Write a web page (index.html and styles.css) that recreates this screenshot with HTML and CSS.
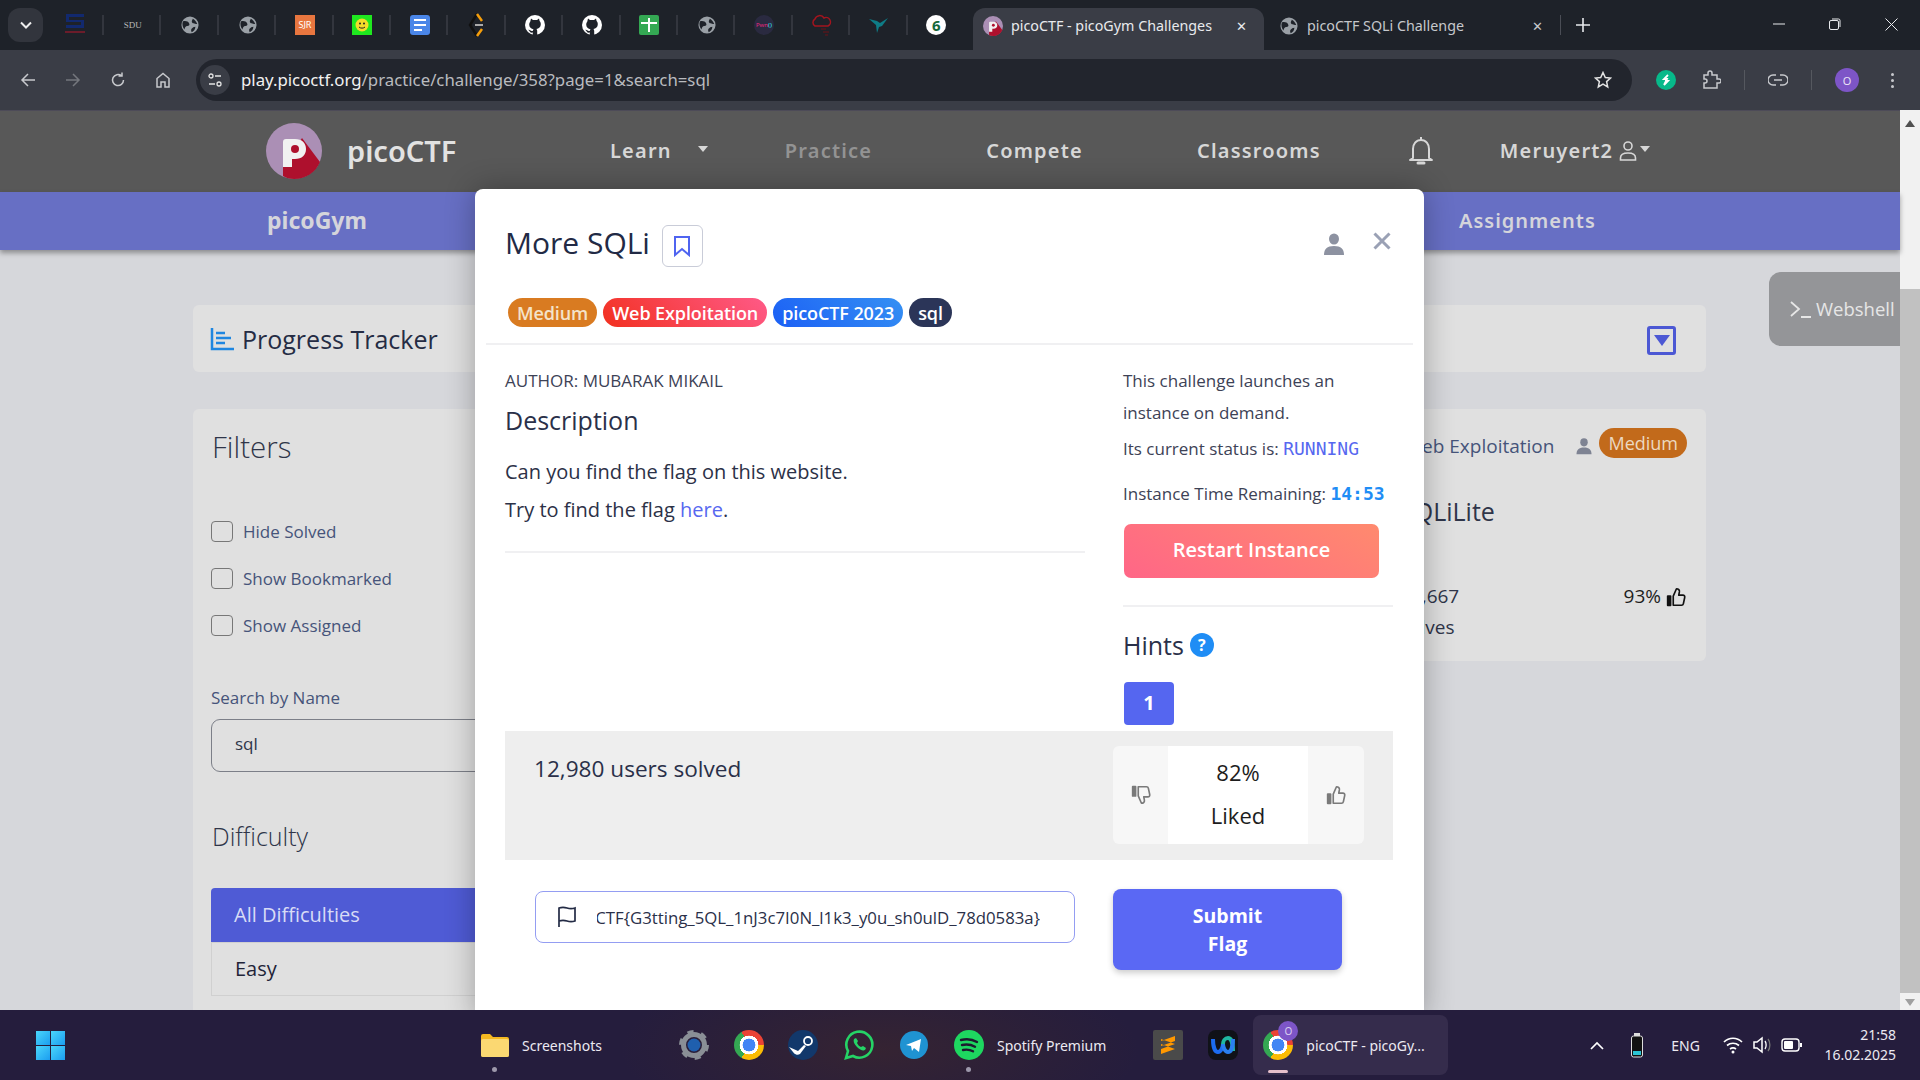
FILE: index.html
```html
<!DOCTYPE html>
<html lang="en">
<head>
  <meta charset="UTF-8">
  <title>picoCTF - picoGym Challenges</title>
  <link rel="stylesheet" href="styles.css">
</head>
<body>
  <svg class="defs" width="0" height="0">
    <defs>
      <symbol id="globe" viewBox="0 0 20 20">
        <circle cx="10" cy="10" r="9.500" fill="#9aa0a6"/>
        <path d="M2 6c3-1 6 0 7 2s0 3-2 3-3 2-3 4C2 13 1 9 2 6zM13 3c2 1 4 3 5 6-2 0-3-1-4-1s-2-1-2-2 1-2 1-3zM16 12c0 3-2 5-4 6-1-1-1-3 0-4s2-2 4-2z" fill="#1e2229"/>
      </symbol>
      <symbol id="github" viewBox="0 0 20 20">
        <circle cx="10" cy="10" r="10" fill="#fff"/>
        <path d="M6 3.500l2 1.400h4l2-1.400.6 2.600c.9 1 1.200 2 1.200 3.200 0 3-2 4.400-4.400 4.700.5.5.8 1.100.8 2V20H7.800v-2.500c-1.800.4-2.900-.1-3.500-1.700l-1.300-1 2 .2c.6 1 1.500 1.300 2.800 1 0-.8.3-1.300.8-1.700-2.400-.3-4.400-1.700-4.400-4.700 0-1.200.3-2.200 1.100-3.200z" fill="#1e2229"/>
      </symbol>
      <symbol id="thumb" viewBox="0 0 24 24">
        <rect x="2" y="10" width="5" height="12" rx="1" fill="currentColor"/>
        <path d="M9 11l3.500-8c2.200 0 3.500 1.500 3.200 3.500l-.7 3.500h4.500c1.500 0 2.300 1.200 2 2.500l-1.500 7c-.2 1-1 1.500-2 1.500H9z" fill="none" stroke="currentColor" stroke-width="1.800" stroke-linejoin="round"/>
      </symbol>
      <symbol id="person" viewBox="0 0 24 24">
        <ellipse cx="12" cy="7" rx="5" ry="5.500" fill="currentColor"/>
        <path d="M2 23c0-6 3-9 10-9s10 3 10 9z" fill="currentColor"/>
      </symbol>
      <symbol id="pico" viewBox="0 0 56 56">
        <circle cx="28" cy="28" r="28" fill="#ab8fb5"/>
        <path d="M17 44L36 15l18 24C50 49 40 56 28 56c-4 0-8-1-11-3z" fill="#ae102d"/>
        <path d="M17 44V19c0-2 1-3 3-3h9c7 0 11 4 11 10s-4 10-11 10h-3v8z" fill="#f1f1f1"/>
        <circle cx="29" cy="26" r="4" fill="#ae102d"/>
      </symbol>
    </defs>
  </svg>

  <div class="tabstrip">
    <div class="tabsearch"><svg width="12" height="8" viewBox="0 0 12 8"><path d="M1 1.500l5 5 5-5" fill="none" stroke="#eee" stroke-width="2"/></svg></div>
    <div class="pins">
      <div class="pin"><svg width="22" height="24" viewBox="0 0 22 24"><path d="M2 1h18v3H5v3h15v8H2v-3h15V9H2z" fill="#12296e"/><rect x="1" y="18" width="20" height="2" fill="#6b1c2a"/></svg></div>
      <div class="pin"><span class="sdu">SDU</span></div>
      <div class="pin"><svg class="ic18"><use href="#globe"/></svg></div>
      <div class="pin"><svg class="ic18"><use href="#globe"/></svg></div>
      <div class="pin"><span class="sjr">SJR</span></div>
      <div class="pin"><span class="smile"><svg width="14" height="14" viewBox="0 0 14 14"><circle cx="7" cy="7" r="6.500" fill="#f3dc2a"/><circle cx="5" cy="5.500" r="1" fill="#222"/><circle cx="9" cy="5.500" r="1" fill="#222"/><path d="M4 9c1.500 1.500 4.500 1.500 6 0" fill="none" stroke="#222"/></svg></span></div>
      <div class="pin"><span class="gdoc"><i></i><i></i><i class="short"></i></span></div>
      <div class="pin"><svg width="20" height="24" viewBox="0 0 20 24"><path d="M10 1L3 12l7 11" fill="none" stroke="#111" stroke-width="2.500"/><path d="M10 1l5 7M10 23l5-7" fill="none" stroke="#f59e0b" stroke-width="2.500"/><rect x="8" y="11" width="8" height="2" fill="#aaa"/></svg></div>
      <div class="pin"><svg class="ic20"><use href="#github"/></svg></div>
      <div class="pin"><svg class="ic20"><use href="#github"/></svg></div>
      <div class="pin"><span class="gplus"></span></div>
      <div class="pin"><svg class="ic18"><use href="#globe"/></svg></div>
      <div class="pin"><span class="pwn">Pwn<b>()</b></span></div>
      <div class="pin"><svg width="22" height="22" viewBox="0 0 22 22"><path d="M5 12a4 4 0 0 1 0-7 5 5 0 0 1 9-1 4 4 0 0 1 4 8z" fill="none" stroke="#a3141e" stroke-width="1.500"/><path d="M11 15h5M13 18h6M15 21h3" stroke="#6d1016" stroke-width="1.200"/></svg></div>
      <div class="pin"><svg width="20" height="18" viewBox="0 0 20 18"><path d="M0 3l8 2 3 2 8-5-6 8-3 1-2 6-1-8z" fill="#0e7c86"/></svg></div>
      <div class="pin last"><span class="six">6</span></div>
    </div>
    <div class="tab active">
      <svg class="favicon"><use href="#pico"/></svg>
      <span class="tabtitle">picoCTF - picoGym Challenges</span>
      <span class="tabx">✕</span>
    </div>
    <div class="tab">
      <svg class="ic18"><use href="#globe"/></svg>
      <span class="tabtitle">picoCTF SQLi Challenge</span>
      <span class="tabx">✕</span>
    </div>
    <span class="tabsep"></span>
    <svg class="newtab" width="14" height="14" viewBox="0 0 14 14"><path d="M7 0v14M0 7h14" stroke="#e8eaed" stroke-width="1.600"/></svg>
    <div class="winctl">
      <svg width="12" height="12" viewBox="0 0 12 12"><path d="M0 6h12" stroke="#e8eaed"/></svg>
      <svg width="12" height="12" viewBox="0 0 12 12"><rect x=".5" y="2.500" width="9" height="9" rx="1.500" fill="none" stroke="#e8eaed"/><path d="M3 1h6.500A1.500 1.500 0 0 1 11 2.500V9" fill="none" stroke="#e8eaed"/></svg>
      <svg width="13" height="13" viewBox="0 0 13 13"><path d="M.5.5l12 12M12.500.5l-12 12" stroke="#e8eaed"/></svg>
    </div>
  </div>

  <div class="toolbar">
    <div class="navbtns">
      <svg width="16" height="16" viewBox="0 0 16 16"><path d="M15 8H2M8 2L2 8l6 6" fill="none" stroke="#c7c9cd" stroke-width="1.500"/></svg>
      <svg width="16" height="16" viewBox="0 0 16 16"><path d="M1 8h13M8 2l6 6-6 6" fill="none" stroke="#74777d" stroke-width="1.500"/></svg>
      <svg width="16" height="16" viewBox="0 0 16 16"><path d="M13.500 8A5.500 5.500 0 1 1 11.500 3.800M12 .5v3.500H8.500" fill="none" stroke="#c7c9cd" stroke-width="1.500"/></svg>
      <svg width="16" height="16" viewBox="0 0 16 16"><path d="M2 15V6.500L8 1.500l6 5V15h-4v-5H6v5z" fill="none" stroke="#c7c9cd" stroke-width="1.500"/></svg>
    </div>
    <div class="omnibox">
      <span class="tune"><svg width="16" height="16" viewBox="0 0 16 16"><circle cx="4" cy="4" r="2" fill="none" stroke="#e3e3e3" stroke-width="1.300"/><path d="M8 4h6M2 12h6" stroke="#e3e3e3" stroke-width="1.300"/><circle cx="12" cy="12" r="2" fill="none" stroke="#e3e3e3" stroke-width="1.300"/></svg></span>
      <span class="url"><span class="host">play.picoctf.org</span>/practice/challenge/358?page=1&amp;search=sql</span>
      <svg class="star" width="18" height="18" viewBox="0 0 18 18"><path d="M9 1.500l2.300 5 5.200.6-3.900 3.500 1.100 5.300L9 13.200l-4.700 2.700 1.100-5.300L1.500 7.100l5.200-.6z" fill="none" stroke="#e3e3e3" stroke-width="1.500"/></svg>
    </div>
    <div class="tools">
      <span class="extgreen"><svg width="14" height="14" viewBox="0 0 14 14"><path d="M9 2L5 6h3l-3 6M5 12l4-4H6" fill="none" stroke="#fff" stroke-width="1.800"/></svg></span>
      <svg class="puzzle" width="20" height="20" viewBox="0 0 20 20"><path d="M3 5h4V3a2 2 0 0 1 4 0v2h5v4h2a2 2 0 0 1 0 4h-2v5H3v-5h1a2 2 0 0 0 0-4H3z" fill="none" stroke="#c7c9cd" stroke-width="1.500"/></svg>
      <span class="toolsep"></span>
      <svg class="chain" width="20" height="12" viewBox="0 0 20 12"><path d="M8 1H5a5 5 0 0 0 0 10h3M12 1h3a5 5 0 0 1 0 10h-3M6 6h8" fill="none" stroke="#c7c9cd" stroke-width="1.500"/></svg>
      <span class="toolsep"></span>
      <span class="avatar">O</span>
      <span class="dots"><i></i><i></i><i></i></span>
    </div>
  </div>

  <div class="page">
    <div class="content">
      <nav class="topnav">
        <svg class="logo"><use href="#pico"/></svg>
        <span class="brand">picoCTF</span>
        <span class="navlink learn">Learn</span>
        <span class="caret learncaret"></span>
        <span class="navlink practice">Practice</span>
        <span class="navlink compete">Compete</span>
        <span class="navlink classrooms">Classrooms</span>
        <svg class="bell" width="26" height="30" viewBox="0 0 26 30"><path d="M13 1v3M5 22V13c0-5 3-9 8-9s8 4 8 9v9l3 2H2z" fill="none" stroke="#d7d7d7" stroke-width="2" stroke-linejoin="round"/><path d="M10 27h6" stroke="#d7d7d7" stroke-width="3" stroke-linecap="round"/></svg>
        <span class="navlink user">Meruyert2</span>
        <svg class="usericon" width="18" height="20" viewBox="0 0 18 20"><circle cx="9" cy="5" r="4" fill="none" stroke="#d7d7d7" stroke-width="1.600"/><path d="M1.500 19v-2c0-3 2-5 7.500-5s7.500 2 7.500 5v2z" fill="none" stroke="#d7d7d7" stroke-width="1.600"/></svg>
        <span class="caret"></span>
      </nav>
      <div class="subnav">
        <span class="subgym">picoGym</span>
        <span class="subassign">Assignments</span>
      </div>

      <main class="practice-main">
        <section class="tracker">
          <svg width="26" height="24" viewBox="0 0 26 24"><path d="M2 1v21h22" fill="none" stroke="#1f86e0" stroke-width="2.500"/><path d="M6 6h9M6 11h15M6 16h9" stroke="#1f86e0" stroke-width="2.500"/></svg>
          <span class="tracker-title">Progress Tracker</span>
          <span class="tracker-toggle"><i></i></span>
        </section>
        <div class="columns">
          <aside class="filters">
            <h3 class="filters-title">Filters</h3>
            <label class="check"><i></i>Hide Solved</label>
            <label class="check"><i></i>Show Bookmarked</label>
            <label class="check"><i></i>Show Assigned</label>
            <div class="search-label">Search by Name</div>
            <div class="search-box">sql</div>
            <h3 class="difficulty">Difficulty</h3>
            <div class="diff active">All Difficulties</div>
            <div class="diff">Easy</div>
          </aside>
          <article class="card">
            <div class="card-top">
              <span class="card-cat">Web Exploitation</span>
              <svg class="card-person"><use href="#person"/></svg>
              <span class="card-pill">Medium</span>
            </div>
            <div class="card-name">SQLiLite</div>
            <div class="card-stats">
              <span>15,667<br>solves</span>
              <span class="card-like">93% <svg class="ic20 card-thumb"><use href="#thumb"/></svg></span>
            </div>
          </article>
        </div>
      </main>
    </div>

    <div class="pagescroll">
      <span class="arrow up"></span>
      <span class="thumbbar"></span>
      <span class="arrow down"></span>
    </div>

    <div class="webshell"><svg width="24" height="20" viewBox="0 0 24 20"><path d="M2 3l8 7-8 7M12 18h10" fill="none" stroke="#e6e6e6" stroke-width="1.800"/></svg>Webshell</div>

    <div class="modal">
      <header class="modal-head">
        <h2 class="modal-title">More SQLi</h2>
        <span class="bookmark"><svg width="18" height="22" viewBox="0 0 18 22"><path d="M2 2h14v18l-7-6-7 6z" fill="none" stroke="#4f64f0" stroke-width="2"/></svg></span>
        <svg class="modal-person"><use href="#person"/></svg>
        <svg class="modal-close" width="18" height="18" viewBox="0 0 18 18"><path d="M1.500 1.500l15 15M16.500 1.500l-15 15" stroke="#9aa1b5" stroke-width="3"/></svg>
      </header>
      <div class="tags">
        <span class="tag tag-med">Medium</span>
        <span class="tag tag-web">Web Exploitation</span>
        <span class="tag tag-pico">picoCTF 2023</span>
        <span class="tag tag-sql">sql</span>
      </div>
      <hr class="rule wide">
      <div class="modal-body">
        <div class="desc">
          <div class="author">AUTHOR: MUBARAK MIKAIL</div>
          <h3 class="desc-head">Description</h3>
          <p class="desc-text">Can you find the flag on this website.</p>
          <p class="desc-text">Try to find the flag <a class="flaglink">here</a>.</p>
          <hr class="rule">
        </div>
        <div class="side">
          <p class="side-line">This challenge launches an</p>
          <p class="side-line">instance on demand.</p>
          <p class="side-line status">Its current status is: <code class="running">RUNNING</code></p>
          <p class="side-line timer">Instance Time Remaining: <code class="remaining">14:53</code></p>
          <div class="restart">Restart Instance</div>
          <hr class="rule">
          <div class="hints">Hints <span class="help">?</span></div>
          <div class="hintbtn">1</div>
        </div>
      </div>
      <div class="band">
        <span class="solved">12,980 users solved</span>
        <div class="likes">
          <span class="likebtn"><svg class="ic22 flip"><use href="#thumb"/></svg></span>
          <span class="likeval">82%<br>Liked</span>
          <span class="likebtn"><svg class="ic22"><use href="#thumb"/></svg></span>
        </div>
      </div>
      <form class="flagform" onsubmit="event.preventDefault();">
        <div class="flaginput">
          <svg width="20" height="22" viewBox="0 0 20 22"><path d="M2 21V2c3-1 5-1 8 0s5 1 8 0v13c-3 1-5 1-8 0s-5-1-8 0" fill="none" stroke="#232b45" stroke-width="1.700"/></svg>
          <span class="flagclip"><span>picoCTF{G3tting_5QL_1nJ3c7I0N_l1k3_y0u_sh0ulD_78d0583a}</span></span>
        </div>
        <button class="submit">Submit<br>Flag</button>
      </form>
    </div>
  </div>

  <footer class="taskbar">
    <div class="winlogo"><i></i><i></i><i></i><i></i></div>
    <div class="task folder">
      <svg width="29" height="24" viewBox="0 0 29 24"><path d="M1 3a2 2 0 0 1 2-2h7l3 3h14a2 2 0 0 1 2 2v16a2 2 0 0 1-2 2H3a2 2 0 0 1-2-2z" fill="#f5b921"/><rect x="1" y="6" width="28" height="18" rx="2" fill="#fbd872"/></svg>
      <span>Screenshots</span><em class="rundot"></em>
    </div>
    <svg class="tbicon gear" width="30" height="30" viewBox="0 0 30 30"><circle cx="15" cy="15" r="10.500" fill="none" stroke="#8a8f96" stroke-width="5"/><circle cx="15" cy="15" r="13" fill="none" stroke="#8a8f96" stroke-width="4" stroke-dasharray="6 7.600"/><circle cx="15" cy="15" r="6.500" fill="#1f5fae"/></svg>
    <span class="chrome tbicon c1"></span>
    <svg class="tbicon" width="30" height="30" viewBox="0 0 30 30"><circle cx="15" cy="15" r="15" fill="#12386b"/><circle cx="20" cy="11" r="4" fill="none" stroke="#fff" stroke-width="1.800"/><path d="M1 17l9 4 6-6 2 1-6 8a5 5 0 0 1-7-2z" fill="#fff"/></svg>
    <svg class="tbicon" width="30" height="30" viewBox="0 0 30 30"><path d="M2 28l2-7a13 13 0 1 1 5 5z" fill="none" stroke="#25d366" stroke-width="2.600"/><path d="M10 9c-1 2 0 5 3 8s6 4 8 3l1-2-3-2-2 1c-2-1-3-2-4-4l1-2-2-3z" fill="#25d366"/></svg>
    <svg class="tbicon" width="28" height="28" viewBox="0 0 28 28"><circle cx="14" cy="14" r="14" fill="#1f93d2"/><path d="M6 14l15-6-2 13-5-4-2 3-1-5z" fill="#fff"/></svg>
    <div class="task spotify">
      <svg width="30" height="30" viewBox="0 0 30 30"><circle cx="15" cy="15" r="15" fill="#1ed760"/><path d="M7 10c6-1.500 11-1 16 2M8 15c5-1 9-.5 13 1.700M9 20c4-.8 7-.4 10 1.300" fill="none" stroke="#1d1b2f" stroke-width="2.400" stroke-linecap="round"/></svg>
      <span>Spotify Premium</span><em class="rundot"></em>
    </div>
    <span class="tbicon sublime"><svg width="20" height="24" viewBox="0 0 20 24"><path d="M3 8l14-5v5L3 13zM3 11l14 5v-5L3 6zM3 16l14-5v5L3 21z" fill="#ff9800"/></svg></span>
    <span class="tbicon webex"><svg width="26" height="20" viewBox="0 0 26 20"><path d="M3 4c0 8 2 13 5 13s5-5 5-8" fill="none" stroke="#1c6cf0" stroke-width="4"/><path d="M23 16c0-8-2-13-5-13s-5 3-5 6" fill="none" stroke="#1fb8a0" stroke-width="4"/><path d="M13 9c0 3 2 8 5 8s5-5 5-13" fill="none" stroke="#2a7ff0" stroke-width="4"/></svg></span>
    <div class="task activeapp">
      <span class="chrome small"><span class="chromebadge">O</span></span>
      <span>picoCTF - picoGy...</span>
      <em class="activebar"></em>
    </div>
    <div class="tray">
      <svg width="14" height="9" viewBox="0 0 14 9"><path d="M1 8l6-6 6 6" fill="none" stroke="#fff" stroke-width="1.700"/></svg>
      <svg class="traybatt" width="14" height="26" viewBox="0 0 14 26"><rect x="4" y="1" width="6" height="3" fill="#ddd"/><rect x="1.500" y="4" width="11" height="21" rx="2" fill="#111" stroke="#ddd"/><rect x="3" y="19" width="8" height="4" fill="#2bc4d4"/></svg>
      <span class="eng">ENG</span>
      <svg class="wifi" width="20" height="18" viewBox="0 0 20 18"><path d="M1 6c5-5 13-5 18 0M4 9.500c3.500-3 8.500-3 12 0M7 13c2-1.500 4-1.500 6 0" fill="none" stroke="#fff" stroke-width="1.700"/><circle cx="10" cy="16" r="1.500" fill="#fff"/></svg>
      <svg class="vol" width="22" height="20" viewBox="0 0 22 20"><path d="M1 7h3l5-4v14l-5-4H1z" fill="none" stroke="#fff" stroke-width="1.500"/><path d="M12 6c1.500 2 1.500 6 0 8" fill="none" stroke="#fff" stroke-width="1.300"/><path d="M15 4c2.500 3 2.500 9 0 12" fill="none" stroke="#777" stroke-width="1.300"/></svg>
      <svg class="batt" width="21" height="14" viewBox="0 0 21 14"><rect x="1" y="1" width="17" height="12" rx="3" fill="none" stroke="#fff" stroke-width="1.400"/><rect x="3" y="3" width="9" height="8" rx="1" fill="#fff"/><rect x="19" y="5" width="2" height="4" fill="#fff"/></svg>
      <div class="clock">21:58<br>16.02.2025</div>
    </div>
  </footer>
</body>
</html>
```

FILE: styles.css
```css
* {
  box-sizing: border-box;
}

html,
body {
  margin: 0;
  height: 100%;
}

body {
  display: flex;
  flex-direction: column;
  height: 1080px;
  overflow: hidden;
  font-family: "Open Sans", "Noto Sans", sans-serif;
  background-color: #d6d7db;
}

.defs {
  position: absolute;
}

p,
h2,
h3 {
  margin: 0;
  font-weight: 400;
}

.ic18 { width: 18px; height: 18px; flex: none; }
.ic20 { width: 20px; height: 20px; }
.ic22 { width: 22px; height: 22px; }

/* browser tabs */
.tabstrip {
  display: flex;
  align-items: flex-end;
  height: 50px;
  flex: none;
  background-color: #1e2229;
  color: #e8eaed;
  font-family: "Noto Sans", sans-serif;
  font-size: 14.300px;
}

.tabsearch {
  display: flex;
  align-items: center;
  justify-content: center;
  width: 35px;
  height: 34px;
  margin: 0 3.700px 8px 8px;
  border-radius: 12px;
  background-color: #32353d;
}

.pins {
  display: flex;
  align-self: flex-start;
  margin-top: 10px;
}

.pin {
  position: relative;
  display: flex;
  align-items: center;
  justify-content: center;
  width: 57.400px;
  height: 30px;
}

.pin::after {
  content: "";
  position: absolute;
  right: 0;
  top: 5px;
  height: 20px;
  width: 2px;
  background-color: #33363e;
}

.pin.last::after {
  display: none;
}

.sdu {
  font-family: "Liberation Serif", serif;
  font-size: 9px;
  color: #b9b9b9;
}

.sjr {
  width: 20px;
  height: 20px;
  background-color: #e8763f;
  color: #fff;
  font-size: 9px;
  line-height: 20px;
  text-align: center;
}

.smile {
  display: flex;
  align-items: center;
  justify-content: center;
  width: 20px;
  height: 20px;
  background-color: #1fe81f;
}

.gdoc {
  display: flex;
  flex-direction: column;
  gap: 3px;
  width: 20px;
  height: 20px;
  padding: 4px;
  border-radius: 3px;
  background-color: #4a86e8;
}

.gdoc i {
  height: 2px;
  background-color: #fff;
}

.gdoc i.short {
  width: 8px;
}

.gplus {
  width: 20px;
  height: 20px;
  border-radius: 2px;
  background:
    linear-gradient(#fff, #fff) center / 2px 14px no-repeat,
    linear-gradient(#fff, #fff) center 7px / 16px 2px no-repeat,
    #34a853;
}

.pwn {
  width: 20px;
  height: 20px;
  border-radius: 50%;
  background-color: #2a2a40;
  color: #e6287f;
  font-size: 6px;
  line-height: 20px;
  text-align: center;
  white-space: nowrap;
}

.pwn b {
  color: #31c3d6;
}

.six {
  width: 20px;
  height: 20px;
  border-radius: 50%;
  background-color: #fff;
  color: #17693b;
  font-size: 15px;
  font-weight: 700;
  line-height: 20px;
  text-align: center;
}

.favicon {
  width: 20px;
  height: 20px;
  flex: none;
}

.tab {
  display: flex;
  align-items: center;
  width: 296px;
  height: 42px;
  padding: 0 17px 7px 16px;
  color: #c6c8cc;
}

.tab .tabtitle {
  margin-left: 9px;
  flex: 1;
  white-space: nowrap;
}

.tab.active {
  width: 291px;
  margin-left: 8px;
  padding-left: 10px;
  border-radius: 12px 12px 0 0;
  background-color: #3a3d46;
  color: #e8eaed;
}

.tab.active .tabtitle {
  margin-left: 8px;
}

.tabx {
  font-size: 13px;
}

.tabsep {
  width: 1px;
  height: 20px;
  margin: 0 0 15px 0;
  background-color: #4a4d55;
}

.newtab {
  margin: 0 0 18px 15px;
}

.winctl {
  display: flex;
  align-items: center;
  gap: 44px;
  margin-left: auto;
  margin-right: 22px;
  align-self: flex-start;
  height: 48px;
}

/* toolbar */
.toolbar {
  display: flex;
  align-items: center;
  height: 60px;
  flex: none;
  background-color: #3a3d46;
}

.navbtns {
  display: flex;
  gap: 29px;
  padding-left: 20px;
  width: 196px;
}

.omnibox {
  display: flex;
  align-items: center;
  width: 1436px;
  height: 42px;
  padding: 0 20px 0 4px;
  border-radius: 21px;
  background-color: #22252d;
}

.tune {
  display: flex;
  align-items: center;
  justify-content: center;
  width: 30px;
  height: 30px;
  border-radius: 50%;
  background-color: #3a3d46;
}

.url {
  margin-left: 11px;
  padding-bottom: 2px;
  flex: 1;
  font-family: "Noto Sans", sans-serif;
  font-size: 16.800px;
  color: #b9bbbf;
  white-space: nowrap;
}

.host {
  color: #f1f1f1;
}

.tools {
  display: flex;
  align-items: center;
  flex: 1;
}

.extgreen {
  display: flex;
  align-items: center;
  justify-content: center;
  width: 20px;
  height: 20px;
  margin-left: 24px;
  border-radius: 50%;
  background-color: #07b98a;
}

.puzzle {
  margin-left: 25px;
}

.toolsep {
  width: 1px;
  height: 20px;
  margin: 0 23px;
  background-color: #55585f;
}

.avatar {
  display: flex;
  align-items: center;
  justify-content: center;
  width: 24px;
  height: 24px;
  border-radius: 50%;
  background-color: #7d55c7;
  color: #ece6f7;
  font-size: 11px;
}

.dots {
  display: flex;
  flex-direction: column;
  gap: 3px;
  margin-left: 32px;
}

.dots i {
  width: 3px;
  height: 3px;
  border-radius: 50%;
  background-color: #c7c9cd;
}

/* site */
.page {
  position: relative;
  display: flex;
  flex: 1;
  min-height: 0;
  overflow: hidden;
}

.content {
  flex: 1;
  min-width: 0;
}

.topnav {
  display: flex;
  align-items: center;
  height: 82px;
  padding: 0 0 2px 266px;
  background-color: #585858;
  border-top: 1px solid #4d4b58;
  color: #d7d7d7;
  font-family: "Noto Sans", sans-serif;
}

.logo {
  width: 56px;
  height: 56px;
  flex: none;
}

.brand {
  width: 111px;
  margin-left: 25px;
  font-size: 29px;
  font-weight: 600;
  color: #e2e2e2;
  white-space: nowrap;
}

.navlink {
  font-size: 20px;
  font-weight: 600;
  letter-spacing: 1.200px;
  white-space: nowrap;
}

.learn { margin-left: 152px; }
.practice { margin-left: 77px; color: #939393; }
.compete { margin-left: 114px; }
.classrooms { margin-left: 114px; }
.bell { margin-left: 87px; }
.user { margin-left: 66px; }
.usericon { margin-left: 6px; }

.caret {
  width: 0;
  height: 0;
  margin-left: 3px;
  margin-bottom: 3px;
  border-left: 5px solid transparent;
  border-right: 5px solid transparent;
  border-top: 6px solid #d7d7d7;
}

.caret.learncaret {
  margin-left: 26px;
}

.subnav {
  position: relative;
  display: flex;
  align-items: center;
  height: 58px;
  padding-bottom: 2px;
  background-color: #676fc4;
  box-shadow: 0 3px 5px rgba(0, 0, 0, 0.35);
  color: #d5d5db;
  font-family: "Noto Sans", sans-serif;
  font-weight: 600;
}

.subgym {
  width: 100px;
  margin-left: 267px;
  font-size: 23px;
  font-weight: 700;
  white-space: nowrap;
}

.subassign {
  margin-left: 1092px;
  font-size: 20px;
  letter-spacing: 1px;
}

.practice-main {
  padding: 55px 194px 0 193px;
}

.tracker {
  display: flex;
  align-items: center;
  height: 67px;
  padding: 0 30px 0 17px;
  border-radius: 6px;
  background-color: #e0e0e0;
  color: #252c44;
}

.tracker-title {
  margin-left: 6px;
  font-size: 25px;
}

.tracker-toggle {
  display: flex;
  align-items: center;
  justify-content: center;
  width: 29px;
  height: 29px;
  margin: 3px 0 0 auto;
  border: 3px solid #4c58d4;
  border-radius: 3px;
}

.tracker-toggle i {
  border-left: 8px solid transparent;
  border-right: 8px solid transparent;
  border-top: 11px solid #4c58d4;
}

.columns {
  display: flex;
  justify-content: space-between;
  align-items: flex-start;
  margin-top: 37px;
}

.filters {
  width: 500px;
  height: 700px;
  padding: 20px 19px;
  border-radius: 6px;
  background-color: #e0e0e0;
}

.filters-title {
  font-size: 29.500px;
  font-weight: 300;
  line-height: 36px;
  color: #2f3549;
  margin-bottom: 54px;
}

.check {
  display: flex;
  align-items: center;
  height: 24px;
  margin-bottom: 23px;
  margin-left: -1px;
  font-size: 17px;
  color: #46547a;
}

.check i {
  width: 22px;
  height: 21px;
  margin-right: 10px;
  border: 1.500px solid #777;
  border-radius: 4px;
}

.search-label {
  margin-top: 49px;
  margin-left: -1px;
  font-size: 17px;
  line-height: 24px;
  color: #46547a;
}

.search-box {
  height: 53px;
  margin-top: 9px;
  margin-left: -1px;
  padding-left: 23px;
  border: 1.500px solid #7c7f88;
  border-radius: 9px;
  font-size: 17px;
  line-height: 48px;
  color: #2f3549;
}

.difficulty {
  margin: 46px 0 34px;
  font-size: 25px;
  font-weight: 300;
  line-height: 36px;
  color: #2f3549;
}

.diff {
  height: 54px;
  margin-left: -1px;
  padding-left: 23px;
  border: 1px solid #d0d0d0;
  font-size: 20px;
  line-height: 52px;
  color: #1f2438;
}

.diff.active {
  border: none;
  border-radius: 4px 4px 0 0;
  background-color: #4f5bd5;
  color: #d8dbf5;
  line-height: 54px;
}

.card {
  width: 326px;
  height: 252px;
  padding: 19px 19px 0 20px;
  border-radius: 6px;
  background-color: #e0e0e0;
  color: #2f3549;
}

.card-top {
  display: flex;
  align-items: center;
  justify-content: flex-end;
  height: 30px;
}

.card-cat {
  padding-top: 6px;
  font-size: 19px;
  color: #46547a;
  white-space: nowrap;
}

.card-person {
  width: 18px;
  height: 20px;
  margin: 6px 6px 0 21px;
  color: #7e8393;
}

.card-pill {
  padding: 0 9px;
  border-radius: 15px;
  background-color: #c26a1b;
  color: #ecd9c0;
  font-size: 18px;
  font-weight: 500;
  line-height: 30px;
}

.card-name {
  margin-top: 33px;
  font-size: 25px;
  line-height: 40px;
}

.card-stats {
  display: flex;
  justify-content: space-between;
  align-items: flex-start;
  margin-top: 50px;
  font-size: 19px;
  line-height: 31px;
}

.card-like {
  display: flex;
  align-items: center;
  gap: 4px;
  color: #1e1e1e;
}

.card-thumb {
  width: 22px;
  height: 22px;
  color: #111;
}

.pagescroll {
  display: flex;
  flex-direction: column;
  align-items: center;
  width: 20px;
  flex: none;
  padding: 10px 0 4px;
  background-color: #f1f1f1;
}

.arrow {
  width: 0;
  border-left: 5px solid transparent;
  border-right: 5px solid transparent;
}

.arrow.up {
  border-bottom: 7px solid #505050;
}

.arrow.down {
  border-top: 7px solid #a0a0a0;
  margin-top: 6px;
}

.thumbbar {
  width: 100%;
  flex: 1;
  margin-top: 162px;
  background-color: #c1c1c1;
}

.webshell {
  position: absolute;
  left: 1769px;
  top: 162px;
  display: flex;
  align-items: center;
  gap: 3px;
  width: 131px;
  height: 74px;
  padding: 0 0 1px 20px;
  border-radius: 12px 0 0 12px;
  background-color: #949598;
  color: #e6e6e6;
  font-size: 18.500px;
  white-space: nowrap;
  overflow: hidden;
}

/* challenge modal */
.modal {
  position: absolute;
  left: 475px;
  top: 79px;
  width: 949px;
  height: 830px;
  padding: 0 31px 0 30px;
  border-radius: 8px 8px 0 0;
  background-color: #fff;
  box-shadow: 0 0 30px rgba(0, 0, 0, 0.3);
  color: #2a3049;
}

.modal-head {
  display: flex;
  align-items: center;
  height: 109px;
}

.modal-title {
  margin-top: -2px;
  font-size: 30px;
  line-height: 40px;
  color: #222a45;
}

.bookmark {
  display: flex;
  align-items: center;
  justify-content: center;
  width: 41px;
  height: 42px;
  margin: 4px 0 0 12px;
  border: 1.500px solid #c9ccd8;
  border-radius: 6px;
}

.modal-person {
  width: 24px;
  height: 26px;
  margin: 1px 0 0 auto;
  color: #8d92a1;
}

.modal-close {
  margin: -5px 2px 0 27px;
}

.tags {
  display: flex;
  gap: 6px;
  height: 29px;
  padding-left: 3px;
}

.tag {
  display: flex;
  align-items: center;
  height: 29px;
  padding: 0 9px;
  border-radius: 15px;
  color: #fff;
  font-size: 18px;
  font-weight: 600;
  letter-spacing: -0.100px;
  white-space: nowrap;
}

.tag-med { background-color: #d97b21; color: #f4e3c9; }
.tag-web { background: linear-gradient(45deg, #f2301f, #ff5a88); }
.tag-pico { background: linear-gradient(45deg, #1b5ff5, #3590f3); }
.tag-sql { background-color: #2b3558; }

.rule {
  margin: 0;
  border: none;
  height: 2px;
  background-color: #f0f0f2;
}

.rule.wide {
  margin: 16px -20px 0 -19px;
}

.modal-body {
  display: grid;
  grid-template-columns: 580px 270px;
  justify-content: space-between;
  height: 386px;
}

.desc {
  padding-top: 24px;
}

.author {
  font-size: 17px;
  line-height: 24px;
  color: #3d4256;
}

.desc-head {
  margin-top: 11px;
  font-size: 25px;
  line-height: 32px;
  color: #2a3049;
}

.desc-text {
  margin-top: 23px;
  font-size: 20px;
  line-height: 26px;
  color: #2c3147;
}

.desc-text + .desc-text {
  margin-top: 12px;
}

.flaglink {
  color: #5768f0;
}

.desc .rule {
  margin-top: 28px;
}

.side {
  padding-top: 24px;
}

.side-line {
  font-size: 17px;
  line-height: 24px;
  color: #3d4256;
  margin-bottom: 8px;
  white-space: nowrap;
}

.side-line.status {
  margin-top: 12px;
  margin-bottom: 21px;
}

.side-line.timer {
  margin-bottom: 18px;
}

.running,
.remaining {
  font-family: "DejaVu Sans Mono", monospace;
  font-size: 18px;
  line-height: 20px;
}

.running {
  color: #5768f0;
}

.remaining {
  color: #1f8df5;
  font-weight: 700;
}

.restart {
  width: 255px;
  height: 54px;
  margin-left: 1px;
  border-radius: 7px;
  background: linear-gradient(30deg, #ff6687, #ff8a6e);
  color: #fff;
  font-size: 20px;
  font-weight: 600;
  line-height: 52px;
  text-align: center;
}

.side .rule {
  margin-top: 27px;
}

.hints {
  display: flex;
  align-items: center;
  gap: 6px;
  margin-top: 20px;
  font-size: 25px;
  line-height: 36px;
  color: #2a3049;
}

.help {
  display: flex;
  align-items: center;
  justify-content: center;
  width: 24px;
  height: 24px;
  border-radius: 50%;
  background-color: #1f8df5;
  color: #fff;
  font-size: 16px;
  font-weight: 700;
}

.hintbtn {
  width: 50px;
  height: 43px;
  margin: 19px 0 0 1px;
  border-radius: 4px;
  background-color: #5566f0;
  color: #fff;
  font-size: 20px;
  font-weight: 700;
  line-height: 41px;
  text-align: center;
}

.band {
  display: flex;
  justify-content: space-between;
  height: 129px;
  padding: 15px 29px 0 29px;
  background-color: #eeeeee;
}

.solved {
  margin-top: 8px;
  font-size: 22.600px;
  line-height: 30px;
  color: #2a3049;
}

.likes {
  display: flex;
  width: 251px;
  height: 98px;
  border-radius: 6px;
  overflow: hidden;
  background-color: #f7f7f7;
}

.likebtn {
  display: flex;
  align-items: center;
  justify-content: center;
  width: 55px;
  color: #7a7a7a;
}

.likebtn:last-child {
  width: 56px;
}

.flip {
  transform: rotate(180deg) scaleX(-1);
}

.likeval {
  width: 140px;
  padding-top: 5px;
  background-color: #fff;
  color: #1d1d1d;
  font-size: 22px;
  line-height: 43px;
  text-align: center;
}

.flagform {
  display: flex;
  align-items: flex-start;
  justify-content: space-between;
  padding: 29px 51px 0 30px;
}

.flaginput {
  display: flex;
  align-items: center;
  width: 540px;
  height: 52px;
  margin-top: 2px;
  padding: 0 34px 0 21px;
  border: 1px solid #949df2;
  border-radius: 8px;
  color: #2a3049;
  font-size: 16.800px;
}

.flagclip {
  display: flex;
  justify-content: flex-end;
  flex: 1;
  margin-left: 20px;
  overflow: hidden;
  white-space: nowrap;
}

.submit {
  width: 229px;
  height: 81px;
  padding: 0;
  border: none;
  border-radius: 8px;
  background-color: #5a68f4;
  box-shadow: 0 3px 6px rgba(0, 0, 0, 0.2);
  color: #fff;
  font-family: inherit;
  font-size: 19.500px;
  font-weight: 700;
  line-height: 28px;
}

/* windows taskbar */
.taskbar {
  position: relative;
  display: flex;
  align-items: center;
  height: 70px;
  flex: none;
  background:
    radial-gradient(ellipse 260px 90px at 880px 40px, rgba(90, 50, 25, 0.3), transparent),
    #251d3d;
  color: #eceaf2;
  font-family: "Noto Sans", sans-serif;
  font-size: 14px;
}

.winlogo {
  display: grid;
  grid-template-columns: 14px 14px;
  grid-auto-rows: 14px;
  gap: 1px;
  margin-left: 36px;
}

.winlogo i {
  background: linear-gradient(135deg, #4ad6fb, #1b9df0);
}

.task {
  position: relative;
  display: flex;
  align-items: center;
  height: 60px;
  white-space: nowrap;
}

.folder {
  gap: 13px;
  margin-left: 415px;
}

.rundot {
  position: absolute;
  left: 12px;
  bottom: 3px;
  width: 5px;
  height: 5px;
  border-radius: 50%;
  background-color: #9d98ab;
}

.tbicon {
  flex: none;
}

.gear { margin-left: 77px; }

.chrome {
  display: block;
  width: 30px;
  height: 30px;
  border-radius: 50%;
  background:
    radial-gradient(circle, #4285f4 0 30%, #fff 31% 44%, transparent 45%),
    conic-gradient(#ea4335 0 90deg, #fbbc05 90deg 210deg, #34a853 210deg 330deg, #ea4335 330deg);
}

.c1 { margin-left: 25px; }
.c1 + svg { margin-left: 24px; }
.c1 + svg + svg { margin-left: 26px; }
.c1 + svg + svg + svg { margin-left: 26px; }

.spotify {
  gap: 13px;
  margin-left: 26px;
}

.sublime {
  display: flex;
  align-items: center;
  justify-content: center;
  width: 30px;
  height: 30px;
  margin-left: 47px;
  border-radius: 2px;
  background-color: #4a4a4a;
}

.webex {
  display: flex;
  align-items: center;
  justify-content: center;
  width: 30px;
  height: 30px;
  margin-left: 25px;
  border-radius: 8px;
  background-color: #101218;
}

.activeapp {
  width: 195px;
  gap: 13px;
  margin-left: 15px;
  padding-left: 10px;
  border-radius: 8px;
  background-color: #352c4c;
}

.chrome.small {
  position: relative;
  flex: none;
}

.chromebadge {
  position: absolute;
  right: -5px;
  top: -9px;
  display: flex;
  align-items: center;
  justify-content: center;
  width: 20px;
  height: 20px;
  border-radius: 50%;
  background-color: #7d55c7;
  color: #d9cdf0;
  font-size: 10px;
}

.activebar {
  position: absolute;
  left: 15px;
  bottom: 2px;
  width: 20px;
  height: 3px;
  border-radius: 2px;
  background-color: #e6bfca;
}

.tray {
  display: flex;
  align-items: center;
  flex: 1;
  padding: 0 24px 0 142px;
}

.traybatt { margin-left: 26px; }
.eng { margin-left: 27px; }
.wifi { margin-left: 23px; }
.vol { margin-left: 10px; }
.batt { margin-left: 6px; }

.clock {
  margin-left: auto;
  text-align: right;
  line-height: 20px;
}
```
